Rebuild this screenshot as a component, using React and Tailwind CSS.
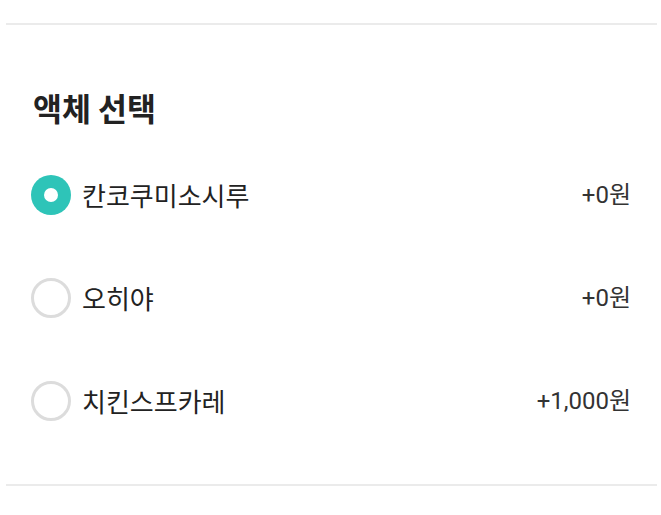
import React, { useState } from 'react';

const options = [
    { id: 'kankoku', label: '칸코쿠미소시루', price: '+0원' },
    { id: 'ohiya', label: '오히야', price: '+0원' },
    { id: 'chicken', label: '치킨스프카레', price: '+1,000원' },
];

const Radio = ({ checked }) => (
    checked ? (
        <span className="w-[40px] h-[40px] rounded-full bg-[#2ec4b8] flex items-center justify-center shrink-0">
            <span className="w-[14px] h-[14px] rounded-full bg-white" />
        </span>
    ) : (
        <span className="w-[40px] h-[40px] rounded-full border-[3px] border-[#dcdcdc] bg-white shrink-0" />
    )
);

export default function App() {
    const [selected, setSelected] = useState('kankoku');

    return (
        <div className="w-[661px] h-[515px] bg-white text-[#222] font-['Noto_Sans_CJK_KR',sans-serif]">
            <div className="pt-[23px] ml-[6px] mr-[4px]">
                <div className="h-[2px] bg-[#ebebeb]" />
            </div>

            <div className="pl-[31px] pr-[30px]">
                {/* Title */}
                <h2 className="mt-[64px] ml-[2px] text-[31.5px] leading-[36px] font-bold">액체 선택</h2>

                {/* Options */}
                <div className="mt-[18px]">
                    {options.map((opt) => (
                        <button
                            key={opt.id}
                            onClick={() => setSelected(opt.id)}
                            className="w-full h-[103px] flex items-center justify-between text-left"
                        >
                            <span className="flex items-center gap-[11px]">
                                <Radio checked={selected === opt.id} />
                                <span className="text-[26px] leading-none">{opt.label}</span>
                            </span>
                            <span className="text-[24px] leading-none text-[#333] font-['Roboto','Noto_Sans_CJK_KR',sans-serif]">{opt.price}</span>
                        </button>
                    ))}
                </div>
            </div>

            <div className="mt-[32px] ml-[6px] mr-[4px]">
                <div className="h-[2px] bg-[#ebebeb]" />
            </div>
        </div>
    );
}
